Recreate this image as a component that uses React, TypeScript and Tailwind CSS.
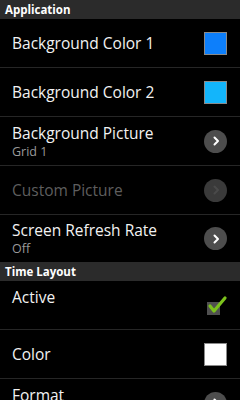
import React from "react";

type Pref = {
  title: string;
  summary?: string;
  widget: "color" | "chevron" | "check";
  color?: string;
  disabled?: boolean;
};

function Chevron({ disabled }: { disabled?: boolean }) {
  return (
    <div
      className={`w-[23px] h-[23px] rounded-full flex items-center justify-center ${
        disabled ? "bg-[#3a3a3a]" : "bg-[#4d4d4d]"
      }`}
    >
      <svg width="10" height="10" viewBox="0 0 10 10">
        <path
          d="M3.5 1.5 L7 5 L3.5 8.5"
          fill="none"
          stroke={disabled ? "#4a4a4a" : "#ffffff"}
          strokeWidth="2"
          strokeLinecap="round"
          strokeLinejoin="round"
        />
      </svg>
    </div>
  );
}

function Check() {
  return (
    <div className="relative w-[23px] h-[23px] flex items-end justify-start">
      <div className="w-[13px] h-[13px] bg-[#505050] ml-[3px] mb-[2px]" />
      <svg className="absolute left-0 top-0" width="24" height="22" viewBox="0 0 24 22">
        <path
          d="M6 12 L10 17 L21 4"
          fill="none"
          stroke="#7cc21c"
          strokeWidth="3.2"
          strokeLinecap="round"
          strokeLinejoin="round"
        />
      </svg>
    </div>
  );
}

function Row({ p, last }: { p: Pref; last?: boolean }) {
  return (
    <div
      className={`flex items-center pl-3 pr-[13px] ${
        last ? "h-[47px]" : "h-[49px] border-b border-[#262626]"
      }`}
    >
      <div className="flex-1 min-w-0 flex flex-col">
        <div
          className={`text-[15.5px] leading-[21px] ${
            p.disabled ? "text-[#5e5e5e]" : "text-[#f2f2f2]"
          }`}
        >
          {p.title}
        </div>
        {p.summary !== undefined && (
          <div className="text-[12.5px] leading-[16px] h-[16px] text-[#9a9a9a]">{p.summary}</div>
        )}
      </div>
      {p.widget === "color" && (
        <div
          className="w-[23px] h-[23px] border border-[#8a8a8a]"
          style={{ backgroundColor: p.color }}
        />
      )}
      {p.widget === "chevron" && <Chevron disabled={p.disabled} />}
      {p.widget === "check" && <Check />}
    </div>
  );
}

function Header({ label }: { label: string }) {
  return (
    <div className="h-[19px] bg-[#2b2b2b] flex items-center pl-[5px] text-[11.5px] font-bold text-white leading-none">
      {label}
    </div>
  );
}

const application: Pref[] = [
  { title: "Background Color 1", widget: "color", color: "#0d7ffb" },
  { title: "Background Color 2", widget: "color", color: "#13b5fb" },
  { title: "Background Picture", summary: "Grid 1", widget: "chevron" },
  { title: "Custom Picture", widget: "chevron", disabled: true },
  { title: "Screen Refresh Rate", summary: "Off", widget: "chevron" },
];

const timeLayout: Pref[] = [
  { title: "Active", summary: "", widget: "check" },
  { title: "Color", widget: "color", color: "#ffffff" },
  { title: "Format", summary: "", widget: "chevron" },
];

export default function App() {
  return (
    <div
      className="w-[240px] h-[400px] overflow-hidden bg-black"
      style={{ fontFamily: '"Open Sans", "Noto Sans", sans-serif' }}
    >
      <Header label="Application" />
      {application.map((p, i) => (
        <Row key={p.title} p={p} last={i === application.length - 1} />
      ))}
      <Header label="Time Layout" />
      {timeLayout.map((p) => (
        <Row key={p.title} p={p} />
      ))}
    </div>
  );
}
